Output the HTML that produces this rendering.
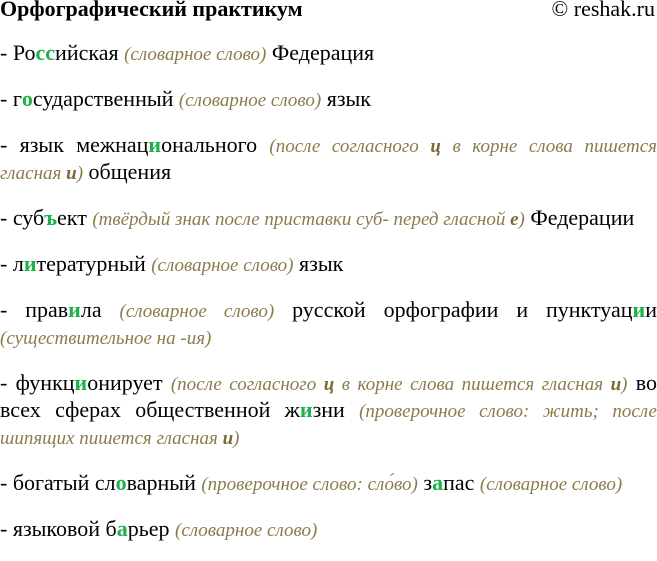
<!DOCTYPE html>
<html><head><meta charset="utf-8"><style>
html,body{margin:0;padding:0;background:#fff;}
body{width:657px;height:541px;overflow:hidden;font-family:"Liberation Serif","DejaVu Serif",serif;font-size:22px;color:#000;}
.t{position:absolute;top:-4px;left:0;right:0;line-height:26px;}
.t b{font-size:22px;}
.t span{position:absolute;right:2px;top:0;font-size:22px;}
.c{position:absolute;top:39px;left:0;width:657px;}
p{margin:0 0 19px 0;line-height:27px;text-align:justify;}
i{color:#8b7b4b;font-size:19px;line-height:0;}
i b{color:#7a6a3a;}
.g{color:#1bb24b;font-weight:bold;}
</style></head><body>
<div class="t"><b>Орфографический практикум</b><span>© reshak.ru</span></div>
<div class="c">
<p>- Ро<span class="g">сс</span>ийская <i>(словарное слово)</i> Федерация</p>
<p>- г<span class="g">о</span>сударственный <i>(словарное слово)</i> язык</p>
<p>- язык межнац<span class="g">и</span>онального <i>(после согласного <b>ц</b> в корне слова пишется гласная <b>и</b>)</i> общения</p>
<p>- суб<span class="g">ъ</span>ект <i>(твёрдый знак после приставки суб- перед гласной <b>е</b>)</i> Федерации</p>
<p>- л<span class="g">и</span>тературный <i>(словарное слово)</i> язык</p>
<p>- прав<span class="g">и</span>ла <i>(словарное слово)</i> русской орфографии и пунктуац<span class="g">и</span>и <i>(существительное на -ия)</i></p>
<p>- функц<span class="g">и</span>онирует <i>(после согласного <b>ц</b> в корне слова пишется гласная <b>и</b>)</i> во всех сферах общественной ж<span class="g">и</span>зни <i>(проверочное слово: жить; после шипящих пишется гласная <b>и</b>)</i></p>
<p>- богатый сл<span class="g">о</span>варный <i>(проверочное слово: сло́во)</i> з<span class="g">а</span>пас <i>(словарное слово)</i></p>
<p>- языковой б<span class="g">а</span>рьер <i>(словарное слово)</i></p>
</div>
</body></html>
